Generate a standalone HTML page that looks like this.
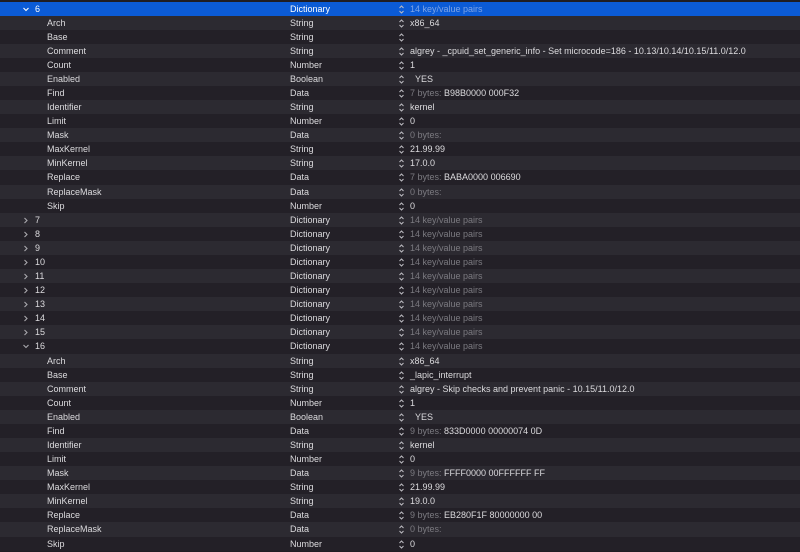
<!DOCTYPE html>
<html><head><meta charset="utf-8"><style>
body{margin:0;width:800px;height:552px;overflow:hidden;background:#1f1d23;font-family:"Liberation Sans",sans-serif;font-size:9px;color:#dcdbde}
.r{position:absolute;left:0;width:800px;height:14.1px;line-height:15px;white-space:nowrap}
.e{background:#2c2a31}.o{background:#232027}
.s{background:#0b5bd6;color:#fff}
.k,.t,.v,.c{position:absolute;top:0}
.t{left:290px}.v{left:410px}
.c{left:398px;width:7px;height:14px}
.g{color:#7b7a80}.s .g{color:#7ea4e6}
.ar{position:absolute;top:0;left:22px;width:8px;height:14px}
</style></head><body>
<svg width="0" height="0" style="position:absolute"><defs>
<symbol id="ud" viewBox="0 0 7 14"><path d="M1.5 6L3.5 4L5.5 6M1.5 9L3.5 11L5.5 9" fill="none" stroke="#bdbcc2" stroke-width="1"/></symbol>
<symbol id="dn" viewBox="0 0 8 14"><path d="M1.5 6L4 8.5L6.5 6" fill="none" stroke="currentColor" stroke-width="1.1"/></symbol>
<symbol id="rt" viewBox="0 0 8 14"><path d="M2.5 5L5 7.5L2.5 10" fill="none" stroke="#a9a8ad" stroke-width="1.1"/></symbol>
</defs></svg>
<div id="w"></div>
<script>
var rows=[
[0,'6','Dictionary','<span class="g">14 key/value pairs</span>','d'],
[1,'Arch','String','x86_64'],[1,'Base','String',''],
[1,'Comment','String','algrey - _cpuid_set_generic_info - Set microcode=186 - 10.13/10.14/10.15/11.0/12.0'],
[1,'Count','Number','1'],[1,'Enabled','Boolean','&nbsp;&nbsp;YES'],
[1,'Find','Data','<span class="g">7 bytes:</span> B98B0000 000F32'],
[1,'Identifier','String','kernel'],[1,'Limit','Number','0'],
[1,'Mask','Data','<span class="g">0 bytes:</span>'],
[1,'MaxKernel','String','21.99.99'],[1,'MinKernel','String','17.0.0'],
[1,'Replace','Data','<span class="g">7 bytes:</span> BABA0000 006690'],
[1,'ReplaceMask','Data','<span class="g">0 bytes:</span>'],
[1,'Skip','Number','0']];
for(var n=7;n<=15;n++)rows.push([0,''+n,'Dictionary','<span class="g">14 key/value pairs</span>','r']);
rows.push([0,'16','Dictionary','<span class="g">14 key/value pairs</span>','d']);
rows=rows.concat([[1,'Arch','String','x86_64'],[1,'Base','String','_lapic_interrupt'],
[1,'Comment','String','algrey - Skip checks and prevent panic - 10.15/11.0/12.0'],
[1,'Count','Number','1'],[1,'Enabled','Boolean','&nbsp;&nbsp;YES'],
[1,'Find','Data','<span class="g">9 bytes:</span> 833D0000 00000074 0D'],
[1,'Identifier','String','kernel'],[1,'Limit','Number','0'],
[1,'Mask','Data','<span class="g">9 bytes:</span> FFFF0000 00FFFFFF FF'],
[1,'MaxKernel','String','21.99.99'],[1,'MinKernel','String','19.0.0'],
[1,'Replace','Data','<span class="g">9 bytes:</span> EB280F1F 80000000 00'],
[1,'ReplaceMask','Data','<span class="g">0 bytes:</span>'],
[1,'Skip','Number','0']]);
var h='';
rows.forEach(function(r,i){
 var cls=i==0?'s':(i%2?'e':'o');
 var ar='';
 if(r[4]=='d')ar='<svg class="ar" style="color:'+(i==0?'#fff':'#a9a8ad')+'"><use href="#dn"/></svg>';
 if(r[4]=='r')ar='<svg class="ar"><use href="#rt"/></svg>';
 h+='<div class="r '+cls+'" style="top:'+(1.5+i*14.08)+'px">'+ar+'<span class="k" style="left:'+(r[0]?47:35)+'px">'+r[1]+'</span><span class="t">'+r[2]+'</span><svg class="c"><use href="#ud"/></svg><span class="v">'+r[3]+'</span></div>';
});
document.getElementById('w').innerHTML=h;
</script>
</body></html>
